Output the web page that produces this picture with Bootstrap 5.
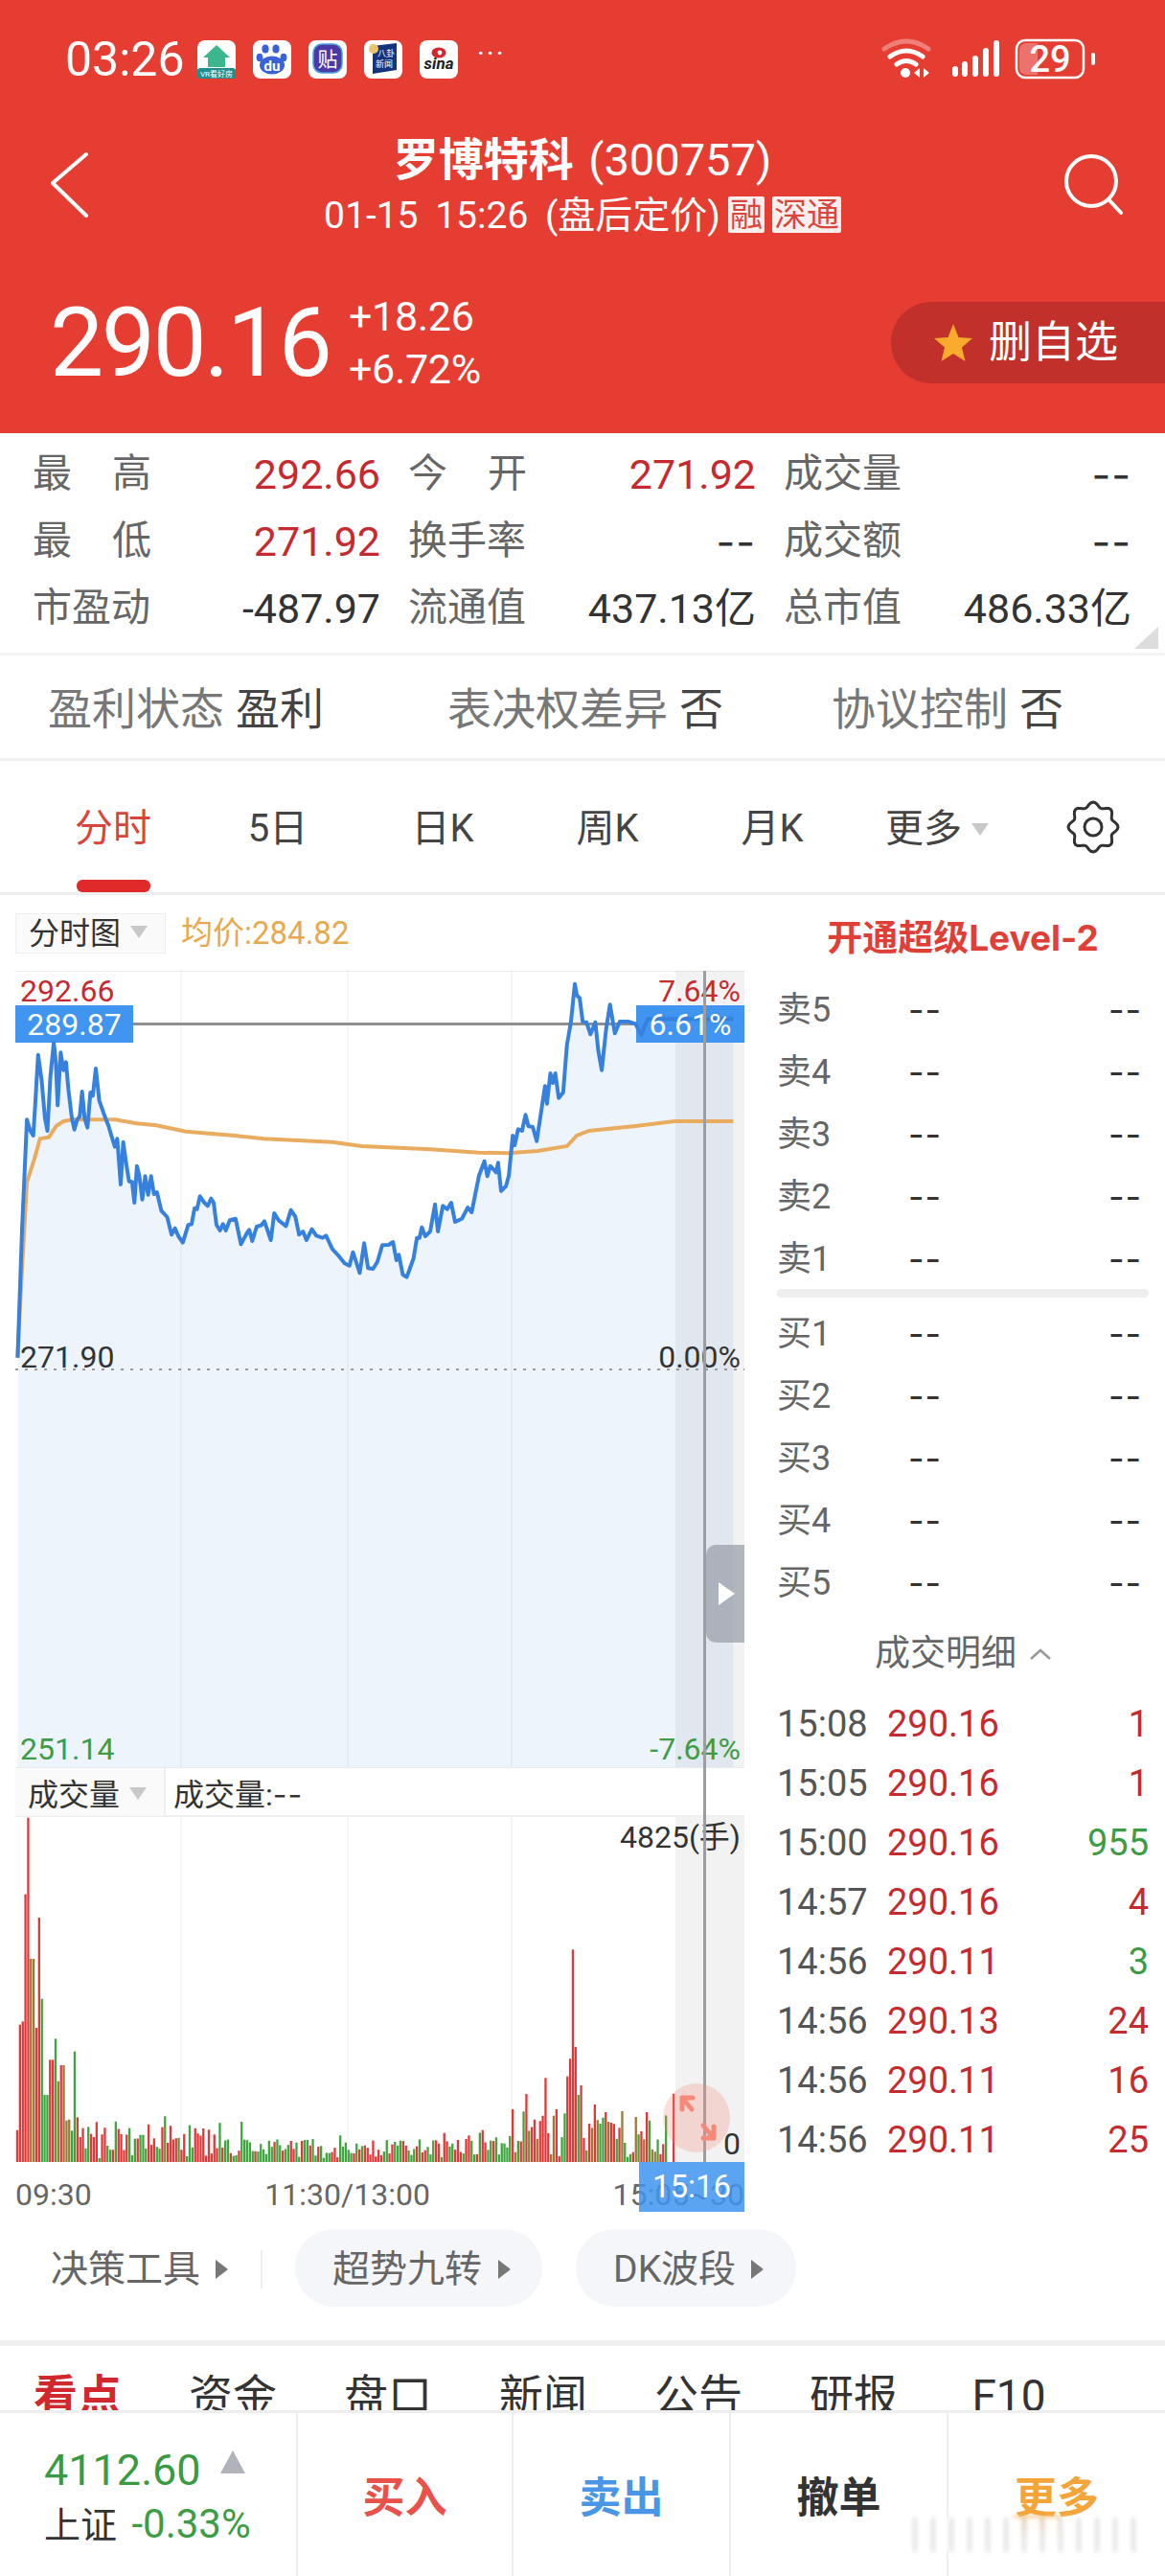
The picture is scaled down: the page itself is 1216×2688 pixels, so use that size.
<!DOCTYPE html>
<html lang="zh">
<head>
    <meta charset="UTF-8">
    <title>罗博特科 (300757)</title>
    <link href="https://cdn.jsdelivr.net/npm/bootstrap@5.3.0/dist/css/bootstrap.min.css" rel="stylesheet">
    <style>
        body {
            margin: 0;
            background: #fff;
            font-family: Roboto, "Noto Sans CJK SC", sans-serif;
            color: #333;
        }
        .phone { width: 1216px; height: 2688px; overflow: hidden; position: relative; background: #fff; }

        /* red header */
        .hdr { height: 452px; background: #e53d32; color: #fff; }
        .status-bar { height: 124px; padding-left: 68px; position: relative; }
        .clock { font-size: 50px; width: 138px; line-height: 1; }
        .app-ico { width: 40px; height: 40px; margin-right: 18px; display: block; }
        .more-dots { font-size: 30px; letter-spacing: 2px; margin-top: -14px; margin-left: 2px; }
        .sys-icons { position: absolute; left: 920px; top: 38px; }
        .nav-row { height: 130px; position: relative; }
        .nav-back { position: absolute; left: 50px; top: 33px; }
        .nav-search { position: absolute; left: 1108px; top: 35px; }
        .stock-name { font-size: 47px; line-height: 58px; padding-top: 14px; white-space: nowrap; }
        .stock-name b { font-weight: 700; }
        .stock-sub { font-size: 39px; line-height: 58px; white-space: nowrap; word-spacing: 8px; }
        .tag-w { background: #fbeeee; color: #d9463c; font-size: 34px; line-height: 38px; height: 38px; padding: 0 2px; display: inline-block; margin-left: 8px; border-radius: 2px; vertical-align: 2px; }
        .price-row { height: 198px; padding: 10px 0 0 52px; position: relative; }
        .big-price { font-size: 100px; line-height: 1; letter-spacing: -2.5px; font-weight: 400; width: 312px; }
        .chg { font-size: 43px; line-height: 55px; letter-spacing: -.3px; }
        .fav-btn { position: absolute; right: 0; top: 61px; width: 286px; height: 85px; background: #c1302a; border-radius: 42px 0 0 42px; font-size: 45px; padding-left: 44px; gap: 16px; }

        /* quote info */
        .info-box { height: 232px; padding: 8px 0 0 34px; position: relative; border-bottom: 3px solid #f3f3f3; font-size: 41px; }
        .info-row { height: 70px; gap: 29px; }
        .info-cell { width: 363px; height: 70px; }
        .info-lb { color: #666; width: 124px; }
        .info-val { font-size: 43px; white-space: nowrap; color: #333; }
        .thin-dash { font-family: Inter, sans-serif; letter-spacing: 1px; }
        .up-c { color: #c52a30; }
        .corner-tri { position: absolute; right: 7px; bottom: 4px; width: 25px; height: 23px; background: #ddd; clip-path: polygon(100% 0, 100% 100%, 0 100%); }
        .flag-row { height: 110px; border-bottom: 3px solid #f0f0f0; font-size: 46px; position: relative; color: #777; }
        .flag-row > span { position: absolute; top: 26px; line-height: 60px; white-space: nowrap; }
        .flag-row b { font-weight: 400; color: #444; margin-left: 12px; }

        /* period tabs */
        .period-tabs { height: 140px; padding-left: 32px; border-bottom: 3px solid #eee; position: relative; font-size: 40px; color: #444; }
        .p-tab { width: 172px; text-align: center; padding-top: 46px; line-height: 50px; white-space: nowrap; position: relative; height: 100%; }
        .p-tab.on { color: #d9453a; }
        .p-tab.on::after { content: ""; position: absolute; left: 48px; bottom: 0; width: 77px; height: 13px; background: #e02a2a; border-radius: 6px; }
        .tri-d { display: inline-block; width: 0; height: 0; border-left: 9px solid transparent; border-right: 9px solid transparent; border-top: 13px solid #c8c8c8; vertical-align: 6px; margin-left: 10px; }
        .gear { position: absolute; left: 1113px; top: 41px; }

        /* chart side */
        .left-col { width: 785px; padding-left: 16px; flex: none; }
        .chip-row { height: 79px; font-size: 33px; padding-top: 19px; }
        .chip-box { width: 157px; height: 42px; background: #fafafa; border: 1px solid #eee; padding-left: 13px; color: #333; line-height: 40px; white-space: nowrap; font-size: 32px; }
        .avg-txt { color: #e8a94e; margin-left: 16px; line-height: 42px; }
        .chart-wrap { width: 761px; position: relative; font-size: 32px; }
        .chart-wrap svg { display: block; }
        .lbl { position: absolute; line-height: 40px; white-space: nowrap; }
        .lbl-r { right: 4px; }
        .lbl-l { left: 5px; }
        .dn-c { color: #3d9c46; }
        .cross-v { position: absolute; left: 718px; top: 0; width: 3px; height: 1243px; background: #9a9ea3; }
        .handle { position: absolute; left: 721px; top: 599px; width: 40px; height: 102px; background: rgba(150,155,165,.7); border-radius: 10px 0 0 10px; }
        .handle::after { content: ""; position: absolute; left: 13px; top: 39px; border-left: 17px solid #fff; border-top: 12px solid transparent; border-bottom: 12px solid transparent; }
        .vol-head { height: 52px; border-bottom: 2px solid #eee; border-top: 1px solid #e8ebf2; line-height: 56px; white-space: nowrap; }
        .vol-head .chip-box { height: 50px; line-height: 56px; border-width: 0 2px 0 0; }
        .vol-head span { margin-left: 8px; }
        .time-row { height: 52px; font-size: 32px; color: #666; padding-top: 14px; line-height: 40px; width: 761px; }
        .time-mid { margin-right: 10px; }
        .time-tag { position: absolute; left: 651px; top: 1243px; width: 110px; height: 52px; background: rgba(64,149,240,.86); color: #fff; text-align: center; line-height: 52px; font-size: 33px; }
        .zoom-circ { position: absolute; left: 676px; top: 1161px; }

        /* order book side */
        .right-col { flex: 1; padding: 0 17px 0 26px; }
        .lv2 { height: 87px; color: #de4037; font-family: Inter, "Noto Sans CJK SC", sans-serif; font-size: 37px; font-weight: 700; text-align: center; line-height: 90px; white-space: nowrap; }
        .bk-row { height: 65px; font-size: 36px; color: #666; }
        .bk-lb { width: 137px; white-space: nowrap; }
        .bk-dash { font-family: Inter, sans-serif; font-size: 36px; color: #333; letter-spacing: 1px; }
        .bk-end { margin-left: auto; margin-right: 7px; }
        .bk-bar { height: 9px; background: #eee; border-radius: 5px; margin: -1px 0 5px; }
        .deal-hd { height: 84px; font-size: 37px; color: #666; gap: 14px; }
        .tr-row { height: 62px; font-size: 38px; white-space: nowrap; }
        .tr-time { width: 115px; color: #555; }
        .tr-price { color: #c52a30; }
        .tr-qty { margin-left: auto; }

        /* tools */
        .tool-row { padding: 18px 0 0 53px; border-bottom: 6px solid #f0f0f0; font-size: 39px; color: #666; white-space: nowrap; height: 140px; }
        .tool-txt { height: 81px; padding-top: 3px; }
        .tri-r { display: inline-block; width: 0; height: 0; border-left: 13px solid #777; border-top: 10px solid transparent; border-bottom: 10px solid transparent; }
        .tool-pill { height: 81px; background: #f5f6fa; border-radius: 40px; padding-top: 3px; }
        .tool-sep { width: 2px; height: 40px; background: #eee; margin: 0 34px; }
        .news-tabs { height: 67px; overflow: hidden; font-size: 46px; color: #333; }
        .news-tabs > div { width: 162px; text-align: center; line-height: 60px; padding-top: 22px; }
        .news-tabs .act { color: #d0282e; font-weight: 700; }

        /* bottom bar */
        .bot-bar { height: 173px; border-top: 3px solid #eee; background: #fff; position: relative; font-weight: 700; font-size: 44px; }
        .bot-bar > div { height: 100%; border-right: 2px solid #eee; padding-top: 8px; }
        .bot-idx { width: 311px; padding: 0 0 0 46px; font-weight: 400; }
        .idx-val { font-size: 45px; line-height: 56px; color: #3a9a44; margin-top: 24px; white-space: nowrap; }
        .idx-tri { display: inline-block; border-left: 13px solid transparent; border-right: 13px solid transparent; border-bottom: 24px solid #b0b4ba; margin-left: 20px; vertical-align: 12px; }
        .idx-sub { font-size: 38px; line-height: 56px; white-space: nowrap; }
        .idx-sub .dn-c { font-size: 42px; margin-left: 6px; }
        .blur-strip { position: absolute; left: 938px; top: 2627px; width: 248px; height: 36px; filter: blur(2px); background: repeating-linear-gradient(90deg, rgba(255,255,255,.95) 0 15px, rgba(205,205,205,.6) 15px 19px); }
        .blur-bleed { position: absolute; left: 1058px; top: 2625px; width: 48px; height: 26px; filter: blur(2px); background: linear-gradient(rgba(244,165,58,.75), rgba(244,165,58,0)); }
    </style>
</head>
<body>
<div class="phone">

    <div class="hdr">
        <div class="status-bar d-flex align-items-center">
            <div class="clock">03:26</div>
            <svg class="app-ico" viewBox="0 0 40 40"><rect width="40" height="40" rx="8" fill="#fff"/><path d="M20 5 L34 18 H29 V28 H11 V18 H6 Z" fill="#3cb68f"/><rect y="29" width="40" height="11" rx="3" fill="#1f8f8c"/><text x="20" y="38" font-size="8" fill="#fff" text-anchor="middle">VR看好房</text></svg>
            <svg class="app-ico" viewBox="0 0 40 40"><rect width="40" height="40" rx="8" fill="#fff"/><g fill="#3a62d8"><ellipse cx="13" cy="9" rx="3.6" ry="4.5"/><ellipse cx="24" cy="9" rx="3.6" ry="4.5"/><ellipse cx="7" cy="18" rx="3.4" ry="4.2"/><ellipse cx="32" cy="18" rx="3.4" ry="4.2"/><ellipse cx="20" cy="26" rx="13" ry="9.5"/></g><text x="20" y="32" font-size="15" font-weight="700" fill="#fff" text-anchor="middle">du</text></svg>
            <svg class="app-ico" viewBox="0 0 40 40"><rect width="40" height="40" rx="8" fill="#fff"/><rect x="5" y="4" width="30" height="30" rx="9" fill="#4b3aa6" stroke="#4aa3e0" stroke-width="1.5"/><text x="20" y="27" font-size="21" fill="#fff" text-anchor="middle">贴</text></svg>
            <svg class="app-ico" viewBox="0 0 40 40"><rect width="40" height="40" rx="8" fill="#fff"/><path d="M9 6 L34 3 V31 L9 35 Z" fill="#14337f"/><circle cx="10" cy="9" r="5" fill="#e9c46a"/><text x="23" y="17" font-size="9" fill="#fff" text-anchor="middle">八卦</text><text x="21" y="28" font-size="9" fill="#fff" text-anchor="middle">新闻</text></svg>
            <svg class="app-ico" viewBox="0 0 40 40"><rect width="40" height="40" rx="8" fill="#fff"/><ellipse cx="20" cy="13" rx="7.5" ry="5.5" fill="#d5262c"/><circle cx="21" cy="13" r="2.4" fill="#fff"/><text x="20" y="30" font-size="17" font-weight="700" font-style="italic" fill="#222" text-anchor="middle">sina</text></svg>
            <div class="more-dots">···</div>
            <svg class="sys-icons" width="230" height="48" viewBox="920 38 230 48">
                <g fill="none" stroke="#fff" stroke-linecap="round">
                    <path d="M923 51 Q946 35 969 51" stroke-width="5" opacity=".35"/>
                    <path d="M929 59 Q946 47 963 59" stroke-width="5"/>
                    <path d="M936 67 Q946 60 956 67" stroke-width="5"/>
                </g>
                <circle cx="945" cy="76" r="5" fill="#fff"/>
                <path d="M960 71 L954 76 L960 81 Z M964 71 L970 76 L964 81 Z" fill="#fff"/>
                <g fill="#fff"><rect x="994" y="69" width="6" height="11" rx="3"/><rect x="1004" y="64" width="6" height="16" rx="3"/><rect x="1015" y="58" width="6" height="22" rx="3"/><rect x="1026" y="50" width="6" height="30" rx="3"/><rect x="1037" y="42" width="6" height="38" rx="3"/></g>
                <rect x="1061" y="42" width="70" height="39" rx="9" fill="none" stroke="#fff" stroke-width="2.5"/>
                <path d="M1064 53 Q1064 45 1072 45 H1083 V78 H1072 Q1064 78 1064 70 Z" fill="#fff" opacity=".28"/>
                <rect x="1139" y="55" width="4" height="13" rx="2" fill="#fff"/>
                <text x="1096" y="75" font-size="38" font-weight="500" fill="#fff" text-anchor="middle" font-family="Roboto, sans-serif">29</text>
            </svg>
        </div>
        <div class="nav-row text-center">
            <svg class="nav-back" width="46" height="70" viewBox="0 0 46 70"><path d="M40 4 L5 34 L40 68" fill="none" stroke="#fff" stroke-width="4" stroke-linecap="round" stroke-linejoin="round"/></svg>
            <div class="stock-name"><b>罗博特科</b> <span class="ms-1">(300757)</span></div>
            <div class="stock-sub">01-15 15:26 (盘后定价)<span class="tag-w">融</span><span class="tag-w">深通</span></div>
            <svg class="nav-search" width="68" height="66" viewBox="0 0 68 66"><circle cx="31" cy="30" r="26" fill="none" stroke="#fff" stroke-width="4"/><path d="M49 49 L62 63" stroke="#fff" stroke-width="4" stroke-linecap="round"/></svg>
        </div>
        <div class="price-row d-flex align-items-center">
            <div class="big-price">290.16</div>
            <div class="chg"><div>+18.26</div><div>+6.72%</div></div>
            <div class="fav-btn d-flex align-items-center">
                <svg width="42" height="40" viewBox="0 0 42 40"><path d="M21 0 L26.5 14 L41 15 L30 24.5 L33.5 39 L21 31 L8.5 39 L12 24.5 L1 15 L15.5 14 Z" fill="#f8ab2c"/></svg>
                <span>删自选</span>
            </div>
        </div>
    </div>

    <div class="info-box">
        <div class="info-row d-flex">
            <div class="info-cell d-flex align-items-center justify-content-between"><span class="info-lb d-flex justify-content-between"><span>最</span><span>高</span></span><span class="info-val up-c">292.66</span></div>
            <div class="info-cell d-flex align-items-center justify-content-between"><span class="info-lb d-flex justify-content-between"><span>今</span><span>开</span></span><span class="info-val up-c">271.92</span></div>
            <div class="info-cell d-flex align-items-center justify-content-between"><span class="info-lb">成交量</span><span class="info-val thin-dash">--</span></div>
        </div>
        <div class="info-row d-flex">
            <div class="info-cell d-flex align-items-center justify-content-between"><span class="info-lb d-flex justify-content-between"><span>最</span><span>低</span></span><span class="info-val up-c">271.92</span></div>
            <div class="info-cell d-flex align-items-center justify-content-between"><span class="info-lb">换手率</span><span class="info-val thin-dash">--</span></div>
            <div class="info-cell d-flex align-items-center justify-content-between"><span class="info-lb">成交额</span><span class="info-val thin-dash">--</span></div>
        </div>
        <div class="info-row d-flex">
            <div class="info-cell d-flex align-items-center justify-content-between"><span class="info-lb">市盈动</span><span class="info-val">-487.97</span></div>
            <div class="info-cell d-flex align-items-center justify-content-between"><span class="info-lb">流通值</span><span class="info-val">437.13亿</span></div>
            <div class="info-cell d-flex align-items-center justify-content-between"><span class="info-lb">总市值</span><span class="info-val">486.33亿</span></div>
        </div>
        <div class="corner-tri"></div>
    </div>

    <div class="flag-row">
        <span style="left:50px">盈利状态<b>盈利</b></span>
        <span style="left:467px">表决权差异<b>否</b></span>
        <span style="left:868px">协议控制<b>否</b></span>
    </div>

    <div class="period-tabs d-flex">
        <div class="p-tab on">分时</div>
        <div class="p-tab">5日</div>
        <div class="p-tab">日K</div>
        <div class="p-tab">周K</div>
        <div class="p-tab">月K</div>
        <div class="p-tab">更多<i class="tri-d"></i></div>
        <svg class="gear" width="56" height="56" viewBox="-28 -28 56 56"><path id="gearPath" fill="none" stroke="#333" stroke-width="3"/><circle r="9" fill="none" stroke="#333" stroke-width="3"/></svg>
    </div>

    <div class="d-flex">
        <div class="left-col">
            <div class="chip-row d-flex">
                <div class="chip-box">分时图<i class="tri-d"></i></div>
                <div class="avg-txt">均价:284.82</div>
            </div>
            <div class="chart-wrap">
                <svg id="priceSvg" width="761" height="831" viewBox="0 0 761 831"></svg>
                <div class="vol-head d-flex"><div class="chip-box">成交量<i class="tri-d"></i></div><span>成交量:<span class="thin-dash ms-0">--</span></span></div>
                <svg id="volSvg" width="761" height="360" viewBox="0 0 761 360"></svg>
                <div class="time-row d-flex justify-content-between"><span>09:30</span><span class="time-mid">11:30/13:00</span><span>15:05~30</span></div>

                <div class="lbl lbl-l up-c" style="top:1px">292.66</div>
                <div class="lbl lbl-r up-c" style="top:1px">7.64%</div>
                <div class="lbl text-white text-center" style="top:36px;left:0;width:123px">289.87</div>
                <div class="lbl text-white text-center" style="top:36px;left:648px;width:113px">6.61%</div>
                <div class="lbl lbl-l" style="top:383px">271.90</div>
                <div class="lbl lbl-r" style="top:383px">0.00%</div>
                <div class="lbl lbl-l dn-c" style="top:792px">251.14</div>
                <div class="lbl lbl-r dn-c" style="top:792px">-7.64%</div>
                <div class="lbl lbl-r" style="top:884px">4825(手)</div>
                <div class="lbl lbl-r" style="top:1204px">0</div>

                <div class="handle"></div>
                <div class="cross-v"></div>
                <svg class="zoom-circ" width="70" height="72" viewBox="0 0 70 72">
                    <ellipse cx="35" cy="36" rx="35" ry="36" fill="#f5887a" opacity=".28"/>
                    <g fill="none" stroke="#f58a7a" stroke-width="5" stroke-linecap="round" stroke-linejoin="round">
                        <path d="M20 15 H31 M20 15 V27 M20 15 L30 27"/>
                        <path d="M53 57 H42 M53 57 V45 M53 57 L42 44"/>
                    </g>
                </svg>
                <div class="time-tag">15:16</div>
            </div>
        </div>

        <div class="right-col">
            <div class="lv2">开通超级Level-2</div>
            <div id="askRows"></div>
            <div class="bk-bar"></div>
            <div id="bidRows"></div>
            <div class="deal-hd d-flex align-items-center justify-content-center">
                <span>成交明细</span>
                <svg width="22" height="12" viewBox="0 0 22 12"><path d="M1 11 L11 2 L21 11" fill="none" stroke="#999" stroke-width="2.5"/></svg>
            </div>
            <div id="tradeRows"></div>
        </div>
    </div>

    <div class="tool-row d-flex">
        <div class="tool-txt d-flex align-items-center">决策工具<i class="tri-r ms-3"></i><div class="tool-sep"></div></div>
        <div class="tool-pill d-flex align-items-center" style="padding-left:39px;padding-right:33px;gap:17px">超势九转<i class="tri-r"></i></div>
        <div class="tool-pill d-flex align-items-center" style="padding-left:39px;padding-right:34px;gap:16px;margin-left:35px">DK波段<i class="tri-r"></i></div>
    </div>

    <div class="news-tabs d-flex">
        <div class="act">看点</div><div>资金</div><div>盘口</div><div>新闻</div><div>公告</div><div>研报</div><div>F10</div>
    </div>

    <div class="bot-bar d-flex">
        <div class="bot-idx">
            <div class="idx-val">4112.60<i class="idx-tri"></i></div>
            <div class="idx-sub">上证 <span class="dn-c">-0.33%</span></div>
        </div>
        <div class="d-flex align-items-center justify-content-center" style="width:225px;color:#e8524a">买入</div>
        <div class="d-flex align-items-center justify-content-center" style="width:227px;color:#4a96e6">卖出</div>
        <div class="d-flex align-items-center justify-content-center" style="width:227px;color:#333">撤单</div>
        <div class="d-flex align-items-center justify-content-center border-0 flex-grow-1" style="color:#f4a53a">更多</div>
    </div>
    <div class="blur-bleed"></div>
    <div class="blur-strip"></div>
</div>

<script src="https://cdn.jsdelivr.net/npm/bootstrap@5.3.0/dist/js/bootstrap.bundle.min.js"></script>
<script>
    // line data is in crop coordinates, toX/toY bring it to chart space
    const blue = [[36,1430],[45,1030],[55,685],[62,720],[68,735],[72,640],[78,482],[85,560],[92,680],[97,720],[103,550],[110,445],[114,500],[118,640],[124,475],[130,530],[135,505],[140,590],[147,680],[152,716],[158,685],[163,675],[168,597],[173,680],[179,710],[185,600],[190,610],[196,525],[203,625],[212,665],[222,705],[230,745],[235,770],[240,745],[247,888],[252,755],[258,820],[264,878],[270,880],[275,945],[280,830],[285,860],[291,935],[297,862],[303,920],[309,862],[315,918],[321,912],[330,970],[342,990],[351,1045],[358,1025],[365,1050],[374,1070],[385,1015],[392,1012],[398,962],[403,965],[409,925],[418,945],[425,955],[432,932],[437,945],[443,1015],[450,1032],[456,1012],[462,1032],[470,1000],[482,995],[493,1075],[505,1040],[510,1030],[516,1065],[525,1020],[535,1015],[541,1003],[554,1062],[561,978],[570,1000],[585,1018],[595,968],[604,988],[612,1045],[620,1035],[627,1062],[638,1028],[647,1048],[660,1055],[667,1048],[680,1090],[692,1110],[705,1135],[715,1142],[722,1100],[736,1165],[745,1072],[753,1150],[763,1152],[772,1130],[782,1078],[795,1077],[804,1068],[811,1125],[816,1108],[824,1170],[832,1178],[846,1120],[853,1055],[858,1055],[863,1022],[870,1050],[880,1035],[890,950],[896,1035],[906,955],[915,965],[923,945],[931,1005],[945,995],[957,960],[965,975],[980,860],[991,815],[997,862],[1003,830],[1015,850],[1019,820],[1025,908],[1035,893],[1041,860],[1049,735],[1053,765],[1060,715],[1068,720],[1075,670],[1081,705],[1090,708],[1098,752],[1115,580],[1119,635],[1126,540],[1131,570],[1136,540],[1143,617],[1152,600],[1160,450],[1168,380],[1176,260],[1180,295],[1186,305],[1192,378],[1200,380],[1208,418],[1218,380],[1224,470],[1231,530],[1240,400],[1248,325],[1258,415],[1268,378],[1285,378],[1300,385],[1312,420],[1325,370],[1345,370],[1500,370]];
    const orange = [[36,1430],[45,1150],[55,880],[70,810],[82,745],[100,740],[115,705],[130,690],[150,685],[200,685],[235,685],[280,697],[320,703],[380,722],[480,735],[540,745],[680,755],[740,768],[880,778],[980,788],[1040,790],[1100,783],[1160,768],[1180,735],[1205,720],[1300,705],[1380,690],[1500,690]];
    const toX = u => (u / 1.96 - 16).toFixed(1);
    const toY = v => (v / 3 - 73).toFixed(1);
    const pts = arr => arr.map(p => toX(p[0]) + ',' + toY(p[1])).join(' ');

    document.getElementById('priceSvg').innerHTML = `
        <rect x="0" y="0" width="761" height="1" fill="#eee"/>
        <polygon points="${pts(blue)} ${toX(1500)},831 ${toX(36)},831" fill="#eef4fc"/>
        <rect x="689" y="0" width="72" height="831" fill="#000" opacity=".05"/>
        <path d="M173 0V831M347 0V831M518 0V831" stroke="#000" stroke-opacity=".05" stroke-width="1.5"/>
        <path d="M0 416H761" stroke="#999" stroke-width="2" stroke-dasharray="3 7"/>
        <rect x="123" y="54" width="525" height="3" fill="#8f8f8f"/>
        <rect x="0" y="36" width="123" height="39" fill="#4095f0"/>
        <rect x="648" y="36" width="113" height="39" fill="#4095f0"/>
        <polyline points="${pts(orange)}" fill="none" stroke="#e9ac5f" stroke-width="4"/>
        <polyline points="${pts(blue)}" fill="none" stroke="#3680de" stroke-width="4" stroke-linejoin="round"/>
    `;

    // volume bars: explicit peaks over a seeded low noise
    const first = [[1268,'r'],[938,'r'],[928,'r'],[530,'r'],[290,'r'],[732,'b'],[732,'b'],[948,'r'],[603,'r'],[857,'g'],[1158,'g'],[1158,'g'],[1048,'r'],[1048,'r'],[982,'g'],[1115,'b'],[1065,'r'],[1065,'b'],[1238,'b'],[1235,'b'],[1270,'g'],[1022,'g'],[1228,'r'],[1290,'r'],[1262,'r'],[1325,'g'],[1258,'g'],[1280,'r'],[1290,'r'],[1243,'r']];
    const peaks = {336:[1225,'g'],398:[1262,'r'],493:[1242,'g'],694:[1285,'g'],907:[1277,'r'],957:[1285,'r'],985:[1268,'r'],1047:[1203,'r'],1075:[1155,'r'],1113:[1105,'r'],1158:[1100,'r'],1163:[1045,'r'],1169:[703,'r'],1175:[1008,'r'],1180:[1158,'g'],1186:[1128,'r'],1214:[1188,'r'],1225:[1248,'g'],1247:[1245,'r'],1320:[1212,'r']};
    const barColor = {r: '#e3383a', g: '#3ea53f', b: '#9c7a3a'};
    const bars = [];
    let seed = 71;
    const rnd = () => { seed = (seed * 16807) % 2147483647; return seed / 2147483647; };
    for (let i = 0; i < 238; i++) {
        const u = 33 + i * 5.6;
        let v, c;
        if (i < first.length) {
            [v, c] = first[i];
        } else {
            const amp = u < 450 ? 115 : u < 900 ? 60 : u < 1040 ? 80 : 160;
            v = 1368 - (12 + rnd() * amp);
            c = rnd() > .5 ? 'r' : 'g';
            if (u > 1040 && rnd() > .6) c = 'b';
            for (const key in peaks) {
                if (Math.abs(key - u) < 2.8) [v, c] = peaks[key];
            }
        }
        bars.push(`<rect x="${(u / 1.96 - 16).toFixed(1)}" y="${((v - 1368) / 3 + 360).toFixed(1)}" width="2.3" height="${((1368 - v) / 3).toFixed(1)}" fill="${barColor[c]}"/>`);
    }
    bars.push(`<rect x="686" y="${((1155 - 1368) / 3 + 360).toFixed(1)}" width="2.3" height="${((1368 - 1155) / 3).toFixed(1)}" fill="#e3383a"/>`);
    document.getElementById('volSvg').innerHTML = `
        <rect x="689" y="0" width="72" height="360" fill="#000" opacity=".05"/>
        <path d="M173 0V360M347 0V360M518 0V360" stroke="#000" stroke-opacity=".05" stroke-width="1.5"/>
    ` + bars.join('');

    const bookRow = name => `
        <div class="bk-row d-flex align-items-center">
            <span class="bk-lb">${name}</span><span class="bk-dash">--</span><span class="bk-dash bk-end">--</span>
        </div>`;
    document.getElementById('askRows').innerHTML = [5, 4, 3, 2, 1].map(n => bookRow('卖' + n)).join('');
    document.getElementById('bidRows').innerHTML = [1, 2, 3, 4, 5].map(n => bookRow('买' + n)).join('');

    const trades = [
        ['15:08', '290.16', '1', 'up-c'], ['15:05', '290.16', '1', 'up-c'],
        ['15:00', '290.16', '955', 'dn-c'], ['14:57', '290.16', '4', 'up-c'],
        ['14:56', '290.11', '3', 'dn-c'], ['14:56', '290.13', '24', 'up-c'],
        ['14:56', '290.11', '16', 'up-c'], ['14:56', '290.11', '25', 'up-c']
    ];
    document.getElementById('tradeRows').innerHTML = trades.map(t => `
        <div class="tr-row d-flex align-items-center">
            <span class="tr-time">${t[0]}</span><span class="tr-price">${t[1]}</span><span class="tr-qty ${t[3]}">${t[2]}</span>
        </div>`).join('');

    // scalloped gear outline
    let gear = '';
    for (let a = 0; a <= 360; a += 5) {
        const r = 23.5 + 2.5 * Math.cos(a * 8 * Math.PI / 180);
        const x = r * Math.sin(a * Math.PI / 180), y = -r * Math.cos(a * Math.PI / 180);
        gear += (a ? 'L' : 'M') + x.toFixed(1) + ' ' + y.toFixed(1);
    }
    document.getElementById('gearPath').setAttribute('d', gear + 'Z');
</script>
</body>
</html>
